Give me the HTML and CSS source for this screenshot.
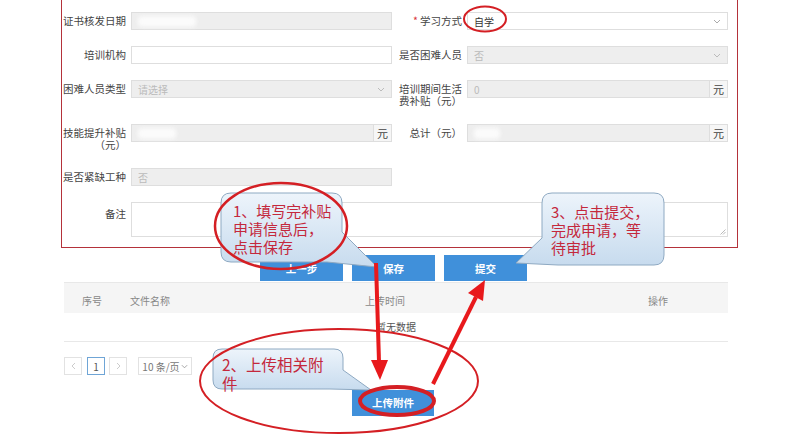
FILE: index.html
```html
<!DOCTYPE html>
<html lang="zh-CN">
<head>
<meta charset="utf-8">
<title>补贴申请</title>
<link rel="stylesheet" href="styles.css">
</head>
<body>
<div class="page">
  <section class="panel">
    <div class="form-grid">
      <div class="lbl">证书核发日期</div>
      <div class="field dis"><span class="smudge w58"></span></div>
      <div class="lbl"><span class="req">*</span>学习方式</div>
      <div class="field sel"><span class="val">自学</span><svg class="chev" viewBox="0 0 8 5" width="8" height="5"><path d="M1 1l3 3 3-3" fill="none" stroke="#aaa" stroke-width="1"/></svg></div>

      <div class="lbl">培训机构</div>
      <div class="field"></div>
      <div class="lbl">是否困难人员</div>
      <div class="field dis sel"><span>否</span><svg class="chev" viewBox="0 0 8 5" width="8" height="5"><path d="M1 1l3 3 3-3" fill="none" stroke="#bbb" stroke-width="1"/></svg></div>

      <div class="lbl">困难人员类型</div>
      <div class="field dis sel"><span>请选择</span><svg class="chev" viewBox="0 0 8 5" width="8" height="5"><path d="M1 1l3 3 3-3" fill="none" stroke="#bbb" stroke-width="1"/></svg></div>
      <div class="lbl two">培训期间生活<br>费补贴（元）</div>
      <div class="field dis grp"><span class="in">0</span><span class="addon">元</span></div>

      <div class="lbl two">技能提升补贴<br>（元）</div>
      <div class="field dis grp"><span class="in"><span class="smudge w38"></span></span><span class="addon">元</span></div>
      <div class="lbl">总计（元）</div>
      <div class="field dis grp"><span class="in"><span class="smudge w26"></span></span><span class="addon">元</span></div>

      <div class="lbl">是否紧缺工种</div>
      <div class="field dis"><span>否</span></div>
      <div></div>
      <div></div>

      <div class="lbl note">备注</div>
      <div class="area"><svg viewBox="0 0 7 7" width="7" height="7"><path d="M6.5 1.5L1.5 6.5M6.5 4L4 6.5" stroke="#aaa" stroke-width="0.8"/></svg></div>
    </div>
  </section>

  <div class="actions">
    <button class="btn">上一步</button>
    <button class="btn">保存</button>
    <button class="btn">提交</button>
  </div>

  <div class="files">
    <div class="thead">
      <span class="c1">序号</span>
      <span class="c2">文件名称</span>
      <span class="c3">上传时间</span>
      <span class="c4">操作</span>
    </div>
    <div class="empty">暂无数据</div>
  </div>

  <div class="pager">
    <span class="pbox"><svg viewBox="0 0 5 8" width="5" height="8"><path d="M4 1L1 4l3 3" fill="none" stroke="#ccc" stroke-width="1"/></svg></span>
    <span class="pbox cur">1</span>
    <span class="pbox next"><svg viewBox="0 0 5 8" width="5" height="8"><path d="M1 1l3 3-3 3" fill="none" stroke="#ccc" stroke-width="1"/></svg></span>
    <span class="psize">10 条/页<svg viewBox="0 0 8 5" width="7" height="5"><path d="M1 1l3 3 3-3" fill="none" stroke="#999" stroke-width="1"/></svg></span>
  </div>

  <div class="upload">
    <button class="btn">上传附件</button>
  </div>
</div>

<svg class="annot" width="800" height="435" viewBox="0 0 800 435">
  <defs>
    <linearGradient id="bub" x1="0" y1="0" x2="0" y2="1">
      <stop offset="0" stop-color="#edf4fb"/>
      <stop offset="1" stop-color="#c7dbee"/>
    </linearGradient>
  </defs>

  <ellipse cx="485" cy="19" rx="21" ry="12.5" fill="none" stroke="#d41f24" stroke-width="2"/>

  <path d="M231,193 H332 Q342,193 342,203 V232 L377,267 L327,262 H231 Q221,262 221,252 V203 Q221,193 231,193 Z" fill="url(#bub)" stroke="#8ea9c2" stroke-width="1"/>
  <text class="bt" font-size="15"><tspan x="233" y="217">1、填写完补贴</tspan><tspan x="233" y="235">申请信息后，</tspan><tspan x="233" y="253">点击保存</tspan></text>
  <ellipse cx="281" cy="226" rx="66" ry="43" fill="none" stroke="#d41f24" stroke-width="2.5"/>

  <path d="M552,193 H654 Q664,193 664,203 V255 Q664,265 654,265 H558 L516,263 L542,238 V203 Q542,193 552,193 Z" fill="url(#bub)" stroke="#8ea9c2" stroke-width="1"/>
  <text class="bt" font-size="15"><tspan x="551" y="218">3、点击提交，</tspan><tspan x="551" y="236">完成申请，等</tspan><tspan x="551" y="254">待审批</tspan></text>

  <path d="M222,349 H334 Q343,349 343,358 V370 L371,390 L330,389 H222 Q213,389 213,380 V358 Q213,349 222,349 Z" fill="url(#bub)" stroke="#8ea9c2" stroke-width="1"/>
  <text class="bt" font-size="15.5"><tspan x="222" y="371">2、上传相关附</tspan><tspan x="222" y="390">件</tspan></text>

  <ellipse cx="339" cy="381" rx="139" ry="52" fill="none" stroke="#d41f24" stroke-width="2"/>
  <ellipse cx="397" cy="401" rx="37" ry="14" fill="none" stroke="#d41f24" stroke-width="4"/>

  <line x1="376" y1="263" x2="379" y2="362" stroke="#e8191c" stroke-width="4"/>
  <polygon points="371,360 388,360 380,380" fill="#e8191c"/>

  <line x1="433" y1="384" x2="476" y2="297" stroke="#e8191c" stroke-width="4"/>
  <polygon points="485,280 483,301 468,293" fill="#e8191c"/>
</svg>
</body>
</html>
```

FILE: styles.css
```css
* { box-sizing: border-box; }

html, body {
  margin: 0;
  padding: 0;
  background: #fff;
}

body {
  width: 800px;
  height: 435px;
  overflow: hidden;
  position: relative;
  font-family: "Noto Sans CJK SC", "Noto Sans", sans-serif;
  color: #555;
}

.page {
  display: flex;
  flex-direction: column;
}

.panel {
  margin-left: 61px;
  width: 677px;
  border: 1px solid #b4323a;
  border-top: none;
  padding: 12px 9px 10px 0;
}

.form-grid {
  display: grid;
  grid-template-columns: 69px 261px 75px 261px;
  row-gap: 16px;
  align-items: start;
}

.lbl {
  text-align: right;
  padding: 3px 5px 3px 0;
  font-size: 10.5px;
  line-height: 12px;
  color: #444;
  white-space: nowrap;
}

.lbl.two {
  height: 28px;
  padding: 3px 5px 1px 0;
}
.lbl.note { padding-top: 6px; }

.req {
  color: #d9323c;
  margin-right: 2px;
}

.field {
  height: 18px;
  border: 1px solid #dedede;
  background: #fff;
  display: flex;
  align-items: center;
  padding: 0 6px;
  font-size: 10px;
  color: #bbb;
}

.field.dis { background: #eeeeee; }

.field.sel { justify-content: space-between; }

.field .val { color: #333; }

.chev { display: block; }

.field.grp { padding: 0; }

.field .in {
  flex: 1;
  height: 100%;
  display: flex;
  align-items: center;
  padding-left: 6px;
}

.addon {
  width: 18px;
  height: 100%;
  border-left: 1px solid #dedede;
  background: #f6f6f6;
  color: #444;
  font-size: 11px;
  display: flex;
  align-items: center;
  justify-content: center;
}

.smudge {
  display: block;
  height: 11px;
  background: #fbfbfb;
  border-radius: 4px;
  filter: blur(2px);
}
.w58 { width: 58px; }
.w38 { width: 38px; }
.w26 { width: 26px; }

.area {
  grid-column: 2 / 5;
  height: 35px;
  border: 1px solid #dedede;
  background: #fff;
  display: flex;
  align-items: flex-end;
  justify-content: flex-end;
  padding: 1px;
}

.area svg { display: block; }

.actions {
  display: flex;
  gap: 9px;
  margin: 7px 0 0 260px;
}

.btn {
  width: 83px;
  height: 26px;
  border: none;
  background: #4090da;
  color: #fff;
  font-family: inherit;
  font-size: 10.5px;
  font-weight: bold;
  padding: 0;
}

.files {
  margin: 1px 0 0 64px;
  width: 664px;
}

.thead {
  height: 31px;
  border-top: 1px solid #e8e8e8;
  background: #f5f5f5;
  display: grid;
  grid-template-columns: 66px 160px 190px 1fr;
  align-items: center;
  padding-top: 5px;
  font-size: 10px;
  color: #888;
}

.thead .c1 { padding-left: 18px; }
.thead .c3 { text-align: center; }
.thead .c4 { padding-left: 168px; }

.empty {
  height: 29px;
  border-bottom: 1px solid #e8e8e8;
  display: flex;
  align-items: center;
  justify-content: center;
  font-size: 10px;
  color: #555;
  padding-bottom: 2px;
}

.pager {
  display: flex;
  align-items: center;
  margin: 15px 0 0 64px;
}

.pbox {
  width: 18px;
  height: 18px;
  border: 1px solid #e2e2e2;
  display: flex;
  align-items: center;
  justify-content: center;
  font-size: 10px;
  color: #555;
  margin-right: 5px;
}

.pbox.cur {
  border-color: #6fa5d6;
  margin-right: 4px;
}

.pbox.next { margin-right: 11px; }

.psize {
  width: 54px;
  height: 18px;
  border: 1px solid #e2e2e2;
  display: flex;
  align-items: center;
  justify-content: center;
  gap: 1px;
  font-size: 10px;
  color: #777;
}

.upload {
  margin: 13px 0 0 352px;
}

.upload .btn { width: 82px; }

.annot {
  position: absolute;
  left: 0;
  top: 0;
  pointer-events: none;
}

.bt {
  font-family: "Noto Sans CJK SC", sans-serif;
  fill: #c4283c;
}
```
